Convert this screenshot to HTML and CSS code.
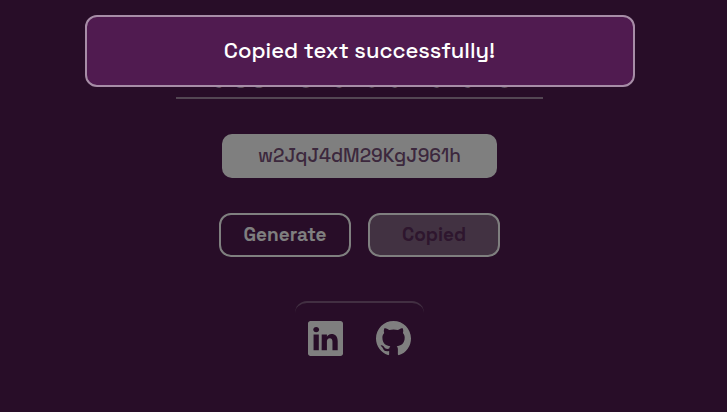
FILE: index.html
```html
<!DOCTYPE html>
<html lang="en">
<head>
  <meta charset="utf-8">
  <meta name="viewport" content="width=device-width, initial-scale=1">
  <title>Password Generator</title>
  <link rel="stylesheet" href="styles.css">
</head>
<body>
  <main class="page">
    <h1 class="title">Password Generator</h1>
    <input class="password" type="text" value="w2JqJ4dM29KgJ961h" aria-label="Generated password" readonly>
    <div class="actions">
      <button class="button" type="button">Generate</button>
      <button class="button button-copied" type="button">Copied</button>
    </div>
    <footer class="social">
      <a class="social-link" href="#" aria-label="LinkedIn">
        <svg viewBox="0 0 16 16" aria-hidden="true"><path d="M0 1.146C0 .513.526 0 1.175 0h13.65C15.474 0 16 .513 16 1.146v13.708c0 .633-.526 1.146-1.175 1.146H1.175C.526 16 0 15.487 0 14.854zm4.943 12.248V6.169H2.542v7.225zm-1.2-8.212c.837 0 1.358-.554 1.358-1.248-.015-.709-.52-1.248-1.342-1.248S2.4 3.226 2.4 3.934c0 .694.521 1.248 1.327 1.248zm4.908 8.212V9.359c0-.216.016-.432.08-.586.173-.431.568-.878 1.232-.878.869 0 1.216.662 1.216 1.634v3.865h2.401V9.25c0-2.22-1.184-3.252-2.764-3.252-1.274 0-1.845.7-2.165 1.193v.025h-.016l.016-.025V6.169h-2.4c.03.678 0 7.225 0 7.225z"/></svg>
      </a>
      <a class="social-link" href="#" aria-label="GitHub">
        <svg viewBox="0 0 16 16" aria-hidden="true"><path d="M8 0C3.58 0 0 3.58 0 8c0 3.54 2.29 6.53 5.47 7.59.4.07.55-.17.55-.38 0-.19-.01-.82-.01-1.49-2.01.37-2.53-.49-2.69-.94-.09-.23-.48-.94-.82-1.13-.28-.15-.68-.52-.01-.53.63-.01 1.08.58 1.23.82.72 1.21 1.87.87 2.33.66.07-.52.28-.87.51-1.07-1.78-.2-3.64-.89-3.64-3.95 0-.87.31-1.59.82-2.15-.08-.2-.36-1.02.08-2.12 0 0 .67-.21 2.2.82.64-.18 1.32-.27 2-.27s1.36.09 2 .27c1.53-1.04 2.2-.82 2.2-.82.44 1.1.16 1.92.08 2.12.51.56.82 1.27.82 2.15 0 3.07-1.87 3.75-3.65 3.95.29.25.54.73.54 1.48 0 1.07-.01 1.93-.01 2.2 0 .21.15.46.55.38A8.01 8.01 0 0 0 16 8c0-4.42-3.58-8-8-8"/></svg>
      </a>
    </footer>
  </main>
  <div class="overlay">
    <dialog class="toast" open>
      <p class="toast-text">Copied text successfully!</p>
    </dialog>
  </div>
</body>
</html>
```
FILE: styles.css
```css
* {
  box-sizing: border-box;
}

body {
  margin: 0;
  min-height: 100vh;
  background: #501b50;
  color: #fff;
  font-family: "Space Grotesk", Inter, sans-serif;
}

.page {
  display: flex;
  flex-direction: column;
  align-items: center;
  padding: 54px 8px 0 0;
}

.title {
  margin: 0;
  padding: 0 14px;
  border-bottom: 2px solid #a78da7;
  font-size: 35px;
  line-height: 43px;
  font-weight: 700;
  white-space: nowrap;
}

.password {
  width: 275px;
  height: 44px;
  margin-top: 35px;
  padding: 0 16px 2px;
  border: 0;
  border-radius: 10px;
  background: #fff;
  color: #78507a;
  font: 500 19px "Space Grotesk", Inter, sans-serif;
  text-align: center;
}

.actions {
  display: flex;
  gap: 17px;
  margin-top: 35px;
}

.button {
  width: 132px;
  height: 44px;
  padding: 0 0 2px;
  border: 2px solid #fff;
  border-radius: 12px;
  background: transparent;
  color: #fff;
  font: 700 19px "Space Grotesk", Inter, sans-serif;
}

.button-copied {
  background: #846484;
  color: #5c2c5c;
}

.social {
  display: flex;
  gap: 33px;
  margin-top: 44px;
  padding: 18px 13px 0;
  border-top: 2px solid #845f84;
  border-radius: 12px;
}

.social-link {
  display: block;
  width: 35px;
  height: 35px;
  color: #fff;
}

.social-link svg {
  display: block;
  fill: currentColor;
}

.overlay {
  position: absolute;
  inset: 0;
  padding: 15px 8px 0 0;
  background: rgba(0, 0, 0, 0.5);
}

.toast {
  position: static;
  width: 550px;
  max-width: 100%;
  margin: 0 auto;
  padding: 17px 18px 19px;
  border: 2px solid #a78da7;
  border-radius: 12px;
  background: #501b50;
  color: #fff;
}

.toast-text {
  margin: 0;
  font-size: 22px;
  line-height: 32px;
  font-weight: 500;
  text-align: center;
}
```
